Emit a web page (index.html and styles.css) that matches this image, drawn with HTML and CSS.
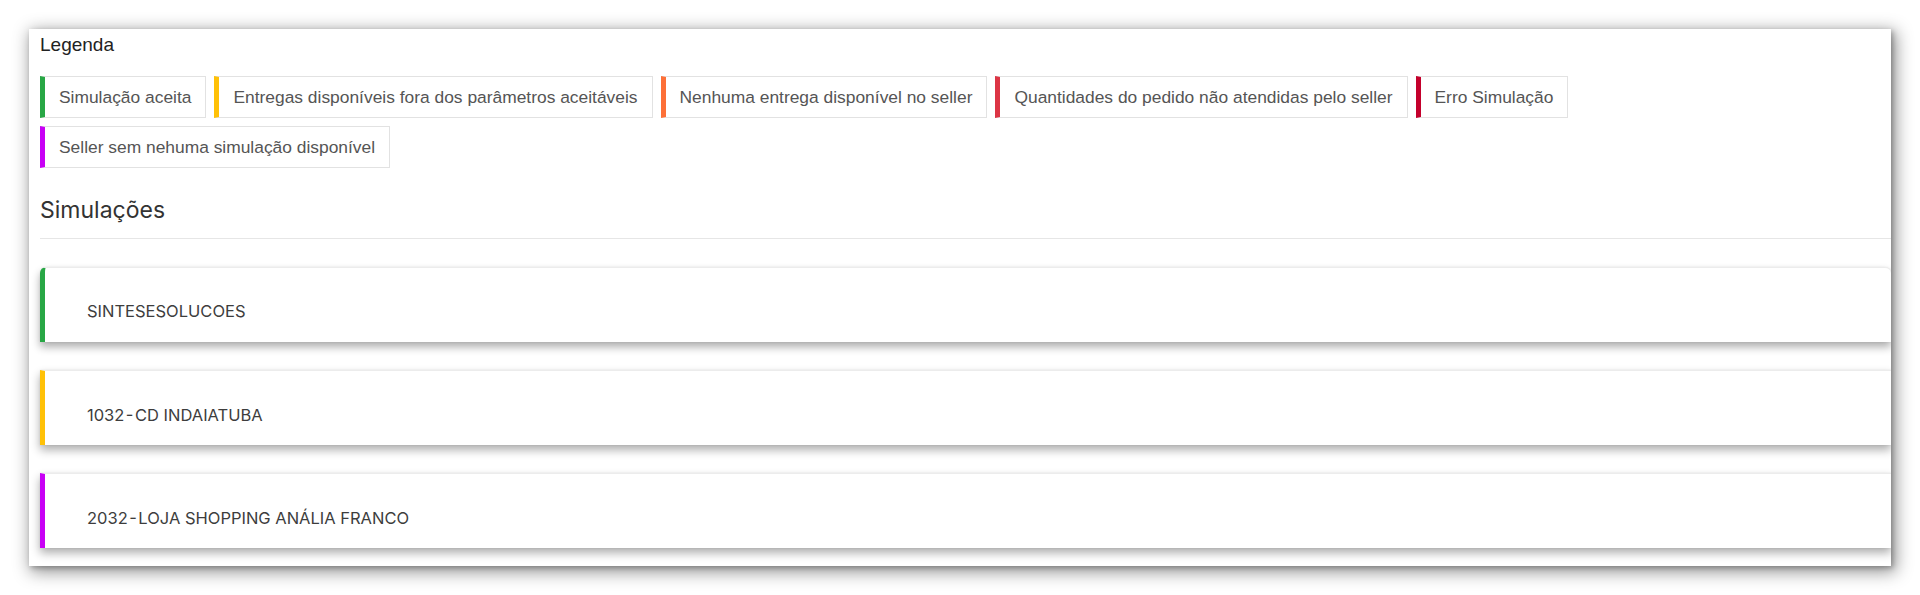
FILE: index.html
```html
<!DOCTYPE html>
<html lang="pt-BR">
<head>
    <meta charset="UTF-8">
    <meta name="viewport" content="width=device-width, initial-scale=1.0">
    <title>Simulações</title>
    <link rel="stylesheet" href="styles.css">
</head>
<body>
    <div class="frame">
        <div class="legend-title">Legenda</div>

        <div class="legend">
            <span class="chip chip-ok">Simulação aceita</span>
            <span class="chip chip-warn">Entregas disponíveis fora dos parâmetros aceitáveis</span>
            <span class="chip chip-none">Nenhuma entrega disponível no seller</span>
            <span class="chip chip-qty">Quantidades do pedido não atendidas pelo seller</span>
            <span class="chip chip-error">Erro Simulação</span>
            <span class="chip chip-empty">Seller sem nehuma simulação disponível</span>
        </div>

        <h2 class="section-title">Simulações</h2>
        <hr class="divider">

        <div class="sim-list">
            <div class="sim-card sim-ok first">SINTESESOLUCOES</div>
            <div class="sim-card sim-warn">1032&#8202;-&#8202;CD INDAIATUBA</div>
            <div class="sim-card sim-empty">2032&#8202;-&#8202;LOJA SHOPPING ANÁLIA FRANCO</div>
        </div>
    </div>
</body>
</html>
```

FILE: styles.css
```css
body {
    margin: 0;
    padding: 0;
    background-color: #fff;
    font-family: "Liberation Sans", Arial, sans-serif;
}

/* Screenshot frame */
.frame {
    margin: 29px;
    height: 537px;
    padding: 4px 0 0 11px;
    box-sizing: border-box;
    background-color: #fff;
    overflow: hidden;
    box-shadow: 3px 4px 16px 2px rgba(0, 0, 0, 0.42), 2px 2px 5px rgba(0, 0, 0, 0.25);
}

/* Legend */
.legend-title {
    font-size: 19px;
    line-height: 24px;
    color: #222;
}

.legend {
    display: flex;
    flex-wrap: wrap;
    gap: 8px;
    max-width: 1600px;
    margin-top: 19px;
}

.chip {
    font-size: 17.4px;
    line-height: 24px;
    padding: 8px 14px;
    color: #555;
    border: 1px solid #e2e2e2;
    border-left: 5px solid #ccc;
    white-space: nowrap;
}

.chip-ok { border-left-color: #28a745; }
.chip-warn { border-left-color: #ffc107; }
.chip-none { border-left-color: #fd7038; }
.chip-qty { border-left-color: #dc3545; }
.chip-error { border-left-color: #c4002c; }
.chip-empty { border-left-color: #c800f5; }

/* Simulations */
.section-title {
    font-family: Inter, "Noto Sans", sans-serif;
    font-weight: 400;
    font-size: 23px;
    line-height: 28px;
    color: #333;
    margin: 28px 0 0 0;
}

.divider {
    border: none;
    border-top: 1px solid #e6e6e6;
    margin: 14px 0 0 0;
}

.sim-list {
    display: flex;
    flex-direction: column;
    gap: 28px;
    margin-top: 28px;
}

.sim-card {
    font-family: Inter, "Noto Sans", sans-serif;
    font-size: 16.5px;
    line-height: 24px;
    color: #3d3d3d;
    height: 75px;
    box-sizing: border-box;
    padding: 32px 0 0 42px;
    background-color: #fff;
    border-top: 1px solid #ececec;
    border-left: 5px solid #ccc;
    box-shadow: 0 5px 9px rgba(0, 0, 0, 0.32), 0 0 2px rgba(0, 0, 0, 0.08);
}

.sim-card.first {
    border-top-left-radius: 6px;
    border-top-right-radius: 6px;
    padding-top: 31px;
}

.sim-ok { border-left-color: #28a745; }
.sim-warn { border-left-color: #ffc107; }
.sim-empty { border-left-color: #c800f5; }
```
